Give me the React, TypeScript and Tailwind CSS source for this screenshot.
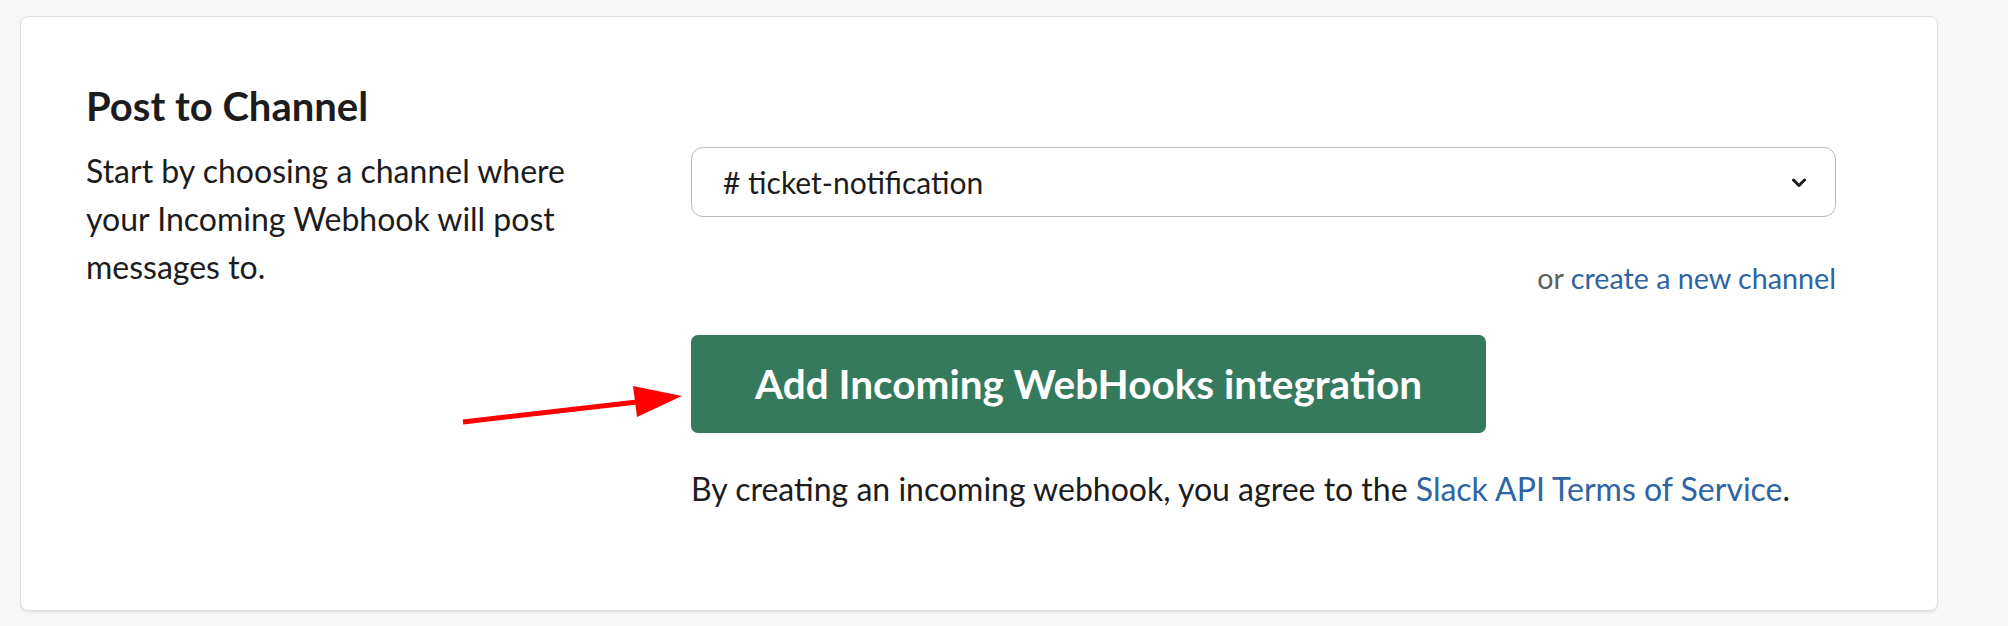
import React from "react";

export default function App() {
  return (
    <div className="w-[2008px] h-[626px] bg-[#f7f7f7] pt-[16px] pl-[20px]" style={{ fontFamily: "Lato, 'Noto Sans', sans-serif" }}>
      <div className="relative w-[1918px] h-[595px] bg-white border border-[#dedede] rounded-[8px] shadow-[0_2px_2px_rgba(0,0,0,0.06)] pt-[65px] pl-[65px]">
        <h3 className="text-[40px] leading-[48px] font-bold text-[#1d1c1d]">Post to Channel</h3>
        <div className="flex mt-[17px]">
          <div className="w-[605px]">
            <p className="w-[500px] text-[32px] leading-[48px] text-[#1d1c1d]">
              Start by choosing a channel where your Incoming Webhook will post messages to.
            </p>
          </div>
          <div className="w-[1145px] flex flex-col">
            <div className="h-[70px] border border-[#b9b9b9] rounded-[12px] flex items-center justify-between pl-[31px] pr-[29px]">
              <span className="text-[30px] text-[#1d1c1d] leading-none"># ticket-notification</span>
              <svg width="14" height="10" viewBox="0 0 14 10" className="mt-[2px]">
                <path d="M1.5 2 L7 7.5 L12.5 2" fill="none" stroke="#1d1c1d" strokeWidth="3" strokeLinecap="round" strokeLinejoin="round" />
              </svg>
            </div>
            <div className="mt-[37px] text-right text-[28.7px] leading-[48px]">
              <span className="text-[#616061]">or </span>
              <a className="text-[#2e64a2]">create a new channel</a>
            </div>
            <div className="mt-[33px]">
              <button className="h-[98px] px-[64px] bg-[#367a5e] rounded-[7px] text-white font-bold text-[40.5px]">
                Add Incoming WebHooks integration
              </button>
            </div>
            <p className="mt-[32px] text-[32px] leading-[48px] text-[#1d1c1d]">
              By creating an incoming webhook, you agree to the <a className="text-[#2e64a2]">Slack API Terms of Service</a>.
            </p>
          </div>
        </div>
        <svg className="absolute left-[434px] top-[363px]" width="235" height="50" viewBox="0 0 235 50">
          <line x1="8" y1="42" x2="182" y2="22" stroke="#ff0000" strokeWidth="5" />
          <polygon points="178,6 227,16 182,37" fill="#ff0000" />
        </svg>
      </div>
    </div>
  );
}
